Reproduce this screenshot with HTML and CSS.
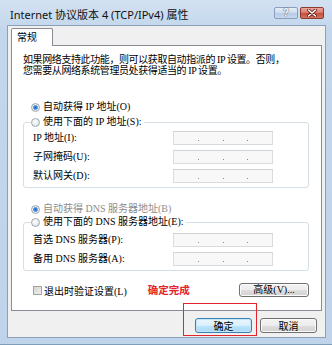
FILE: index.html
```html
<!DOCTYPE html>
<html lang="zh-CN">
<head>
<meta charset="utf-8">
<link rel="stylesheet" href="styles.css">
</head>
<body>
<div class="window">
  <div class="titlebar">
    <span class="title">Internet 协议版本 4 (TCP/IPv4) 属性</span>
    <div class="caption-btns">
      <span class="cbtn help">?</span>
      <span class="cbtn close"><svg width="10" height="8" viewBox="0 0 10 8"><path d="M1.5 1 L8.5 7 M8.5 1 L1.5 7" stroke="#5a1a10" stroke-width="3" stroke-linecap="round"/><path d="M1.5 1 L8.5 7 M8.5 1 L1.5 7" stroke="#fff" stroke-width="1.6" stroke-linecap="round"/></svg></span>
    </div>
  </div>
  <div class="client">
    <div class="tabs"><span class="tab">常规</span></div>
    <div class="panel">
      <p class="desc">如果网络支持此功能，则可以获取自动指派的 IP 设置。否则，<br>您需要从网络系统管理员处获得适当的 IP 设置。</p>
      <div class="opt first"><span class="radio on"></span><span>自动获得 IP 地址(O)</span></div>
      <fieldset class="group">
        <legend class="opt"><span class="radio"></span><span>使用下面的 IP 地址(S):</span></legend>
        <div class="row"><span class="label">IP 地址(I):</span><span class="ipbox"><i></i><i></i><i></i></span></div>
        <div class="row"><span class="label">子网掩码(U):</span><span class="ipbox"><i></i><i></i><i></i></span></div>
        <div class="row"><span class="label">默认网关(D):</span><span class="ipbox"><i></i><i></i><i></i></span></div>
      </fieldset>
      <div class="opt dns-auto disabled"><span class="radio on"></span><span>自动获得 DNS 服务器地址(B)</span></div>
      <fieldset class="group dns">
        <legend class="opt"><span class="radio"></span><span>使用下面的 DNS 服务器地址(E):</span></legend>
        <div class="row"><span class="label">首选 DNS 服务器(P):</span><span class="ipbox"><i></i><i></i><i></i></span></div>
        <div class="row"><span class="label">备用 DNS 服务器(A):</span><span class="ipbox"><i></i><i></i><i></i></span></div>
      </fieldset>
      <div class="footer-row">
        <span class="check"></span><span class="check-label">退出时验证设置(L)</span>
        <span class="note">确定完成</span>
        <span class="btn adv">高级(V)...</span>
      </div>
    </div>
    <div class="actions">
      <span class="btn default">确定</span>
      <span class="btn">取消</span>
    </div>
  </div>
  <div class="highlight"></div>
</div>
</body>
</html>
```

FILE: styles.css
```css
* { box-sizing: border-box; }
html, body { margin: 0; padding: 0; }
body {
  width: 332px;
  height: 345px;
  overflow: hidden;
  font-family: "Liberation Serif", "Noto Sans CJK SC", serif;
  font-size: 10px;
  color: #000;
}
.window {
  position: relative;
  width: 332px;
  height: 345px;
  padding: 0 6px 6px 7px;
  display: flex;
  flex-direction: column;
  background: linear-gradient(180deg, #d3e2f2 0%, #c2d6ec 30px, #bfd4ea 100%);
  border-bottom: 1px solid #7f9db9;
}
.titlebar {
  height: 25px;
  display: flex;
  align-items: flex-start;
  justify-content: space-between;
}
.title {
  font-family: "Noto Sans", "Noto Sans CJK SC", sans-serif;
  font-size: 11px;
  line-height: 14px;
  margin: 8px 0 0 3px;
  color: #111;
}
.caption-btns {
  display: flex;
  gap: 2px;
  margin: 7px 2px 0 0;
}
.cbtn {
  width: 24px;
  height: 12px;
  border-radius: 2px;
  display: flex;
  align-items: center;
  justify-content: center;
}
.help {
  background: linear-gradient(180deg, #e6eef8 0%, #cbdbee 50%, #b6cbe4 51%, #c6d8ee 100%);
  border: 1px solid #8aa0ba;
  color: #fff;
  font-family: "Liberation Sans", sans-serif;
  font-weight: bold;
  font-size: 10px;
  line-height: 10px;
  text-shadow: 0 0 1px #40587a, 0 0 1px #40587a;
}
.close {
  background: linear-gradient(180deg, #eca79b 0%, #d9776a 50%, #c44d38 51%, #d57360 100%);
  border: 1px solid #8a3b30;
}
.client {
  flex: 1;
  background: #f0f0f0;
  border: 1px solid #8aa0b8;
  padding: 2px 3px 0 3px;
  display: flex;
  flex-direction: column;
}
.tabs {
  display: flex;
  height: 17px;
  position: relative;
  z-index: 1;
}
.tab {
  width: 42px;
  height: 18px;
  background: #fff;
  border: 1px solid #898c95;
  border-bottom: none;
  border-radius: 2px 2px 0 0;
  padding-left: 5px;
  line-height: 16px;
  font-family: "Noto Sans CJK SC", sans-serif;
  font-size: 10px;
}
.panel {
  height: 266px;
  background: #fff;
  border: 1px solid #898c95;
  padding: 0 12px 0 11px;
  display: flex;
  flex-direction: column;
}
.desc {
  margin: 8px 0 0 0;
  line-height: 11px;
  letter-spacing: -0.4px;
  white-space: nowrap;
}
.opt {
  display: flex;
  align-items: center;
  height: 12px;
  line-height: 12px;
  gap: 3px;
}
.opt.first { margin: 25px 0 0 8px; }
.opt.dns-auto { margin: 15px 0 0 8px; }
.disabled { color: #8d8d8d; }
.radio {
  width: 9px;
  height: 9px;
  border-radius: 50%;
  border: 1px solid #9ea7b0;
  background: radial-gradient(circle at 40% 35%, #ffffff 0%, #e8ebee 60%, #d3d8dd 100%);
  flex: none;
}
.radio.on {
  background: radial-gradient(circle, #2a62b4 0%, #3f86d6 30%, #8ab8e8 48%, #e9eef3 55%, #dde2e7 100%);
}
.group {
  margin: 3px 0 0 0;
  padding: 3px 0 4px 9px;
  border: 1px solid #d5dfe5;
  border-radius: 3px;
  min-width: 0;
  display: flex;
  flex-direction: column;
  gap: 5px;
}
.group legend {
  padding: 0 2px 0 0;
  margin-left: -2px;
}
.group.dns { margin-top: 1px; padding-top: 5px; }
.row {
  display: flex;
  align-items: center;
  height: 14px;
}
.label {
  width: 140px;
  flex: none;
  line-height: 14px;
}
.ipbox {
  width: 100px;
  height: 14px;
  flex: none;
  border: 1px solid #d9dcdf;
  border-top-color: #cfd3d6;
  background: #f8f8f8;
  display: flex;
  justify-content: space-evenly;
  align-items: flex-end;
  padding-bottom: 3px;
}
.ipbox i {
  width: 1px;
  height: 1px;
  background: #8c8c8c;
}
.footer-row {
  display: flex;
  align-items: center;
  height: 14px;
  margin: 12px 0 0 10px;
}
.check {
  width: 9px;
  height: 9px;
  border: 1px solid #a3a3a3;
  background: linear-gradient(135deg, #d4d4d4, #f0f0f0);
  margin-right: 2px;
  flex: none;
}
.note {
  margin-left: 21px;
  color: #e3252a;
  font-family: "Noto Sans CJK SC", sans-serif;
  font-weight: bold;
  font-size: 10.5px;
  line-height: 14px;
}
.btn {
  display: flex;
  align-items: center;
  justify-content: center;
  height: 15px;
  border: 1px solid #707070;
  border-radius: 3px;
  background: linear-gradient(180deg, #f4f4f4 0%, #ececec 50%, #dedede 51%, #d2d2d2 100%);
  box-shadow: inset 0 0 0 1px #fbfbfb;
  font-family: "Noto Sans CJK SC", sans-serif;
  font-size: 10px;
  line-height: 12px;
  color: #000;
}
.adv {
  width: 70px;
  height: 14px;
  flex: none;
  margin-left: auto;
  font-family: "Liberation Serif", "Noto Sans CJK SC", serif;
}
.actions {
  display: flex;
  justify-content: flex-end;
  gap: 8px;
  margin: 7px 5px 0 0;
}
.actions .btn { width: 57px; }
.btn.default {
  border-color: #3c7fb1;
  background: linear-gradient(180deg, #eaf6fd 0%, #d9f0fc 50%, #bee6fd 51%, #a7d9f5 100%);
  box-shadow: inset 0 0 0 1px #c4e5f6;
}
.highlight {
  position: absolute;
  left: 183px;
  top: 303px;
  width: 74px;
  height: 33px;
  border: 1px solid #e0262a;
}
```
